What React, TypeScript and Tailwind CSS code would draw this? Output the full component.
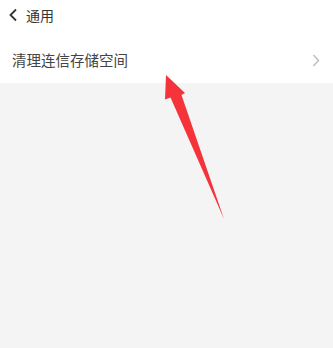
import React from "react";

export default function App() {
  return (
    <div
      className="relative w-[333px] h-[348px] bg-[#f4f4f4] overflow-hidden"
      style={{ fontFamily: '"Noto Sans CJK SC", "Noto Sans", sans-serif' }}
    >
      <div className="bg-white h-[83px] flex flex-col">
        <div className="flex items-center h-[30px] pl-[8px]">
          <svg width="11" height="14" viewBox="0 0 11 14" className="mr-[7px]">
            <path d="M8 1.5 L2.5 7 L8 12.5" fill="none" stroke="#333" strokeWidth="1.8" />
          </svg>
          <span className="text-[14px] leading-none text-[#333]">通用</span>
        </div>
        <div className="flex items-center justify-between h-[53px] pt-[7px] pl-[12px] pr-[13px]">
          <span className="text-[14.5px] leading-none text-[#444]">清理连信存储空间</span>
          <svg width="8" height="13" viewBox="0 0 8 13">
            <path d="M1.5 1 L6.5 6.5 L1.5 12" fill="none" stroke="#bdbdbd" strokeWidth="1.4" />
          </svg>
        </div>
      </div>
      <svg className="absolute left-0 top-0" width="333" height="348" viewBox="0 0 333 348">
        <polygon points="166,75 185,93 181.5,95 224,219 170.5,97.5 165,99.5" fill="#f5333a" />
      </svg>
    </div>
  );
}
